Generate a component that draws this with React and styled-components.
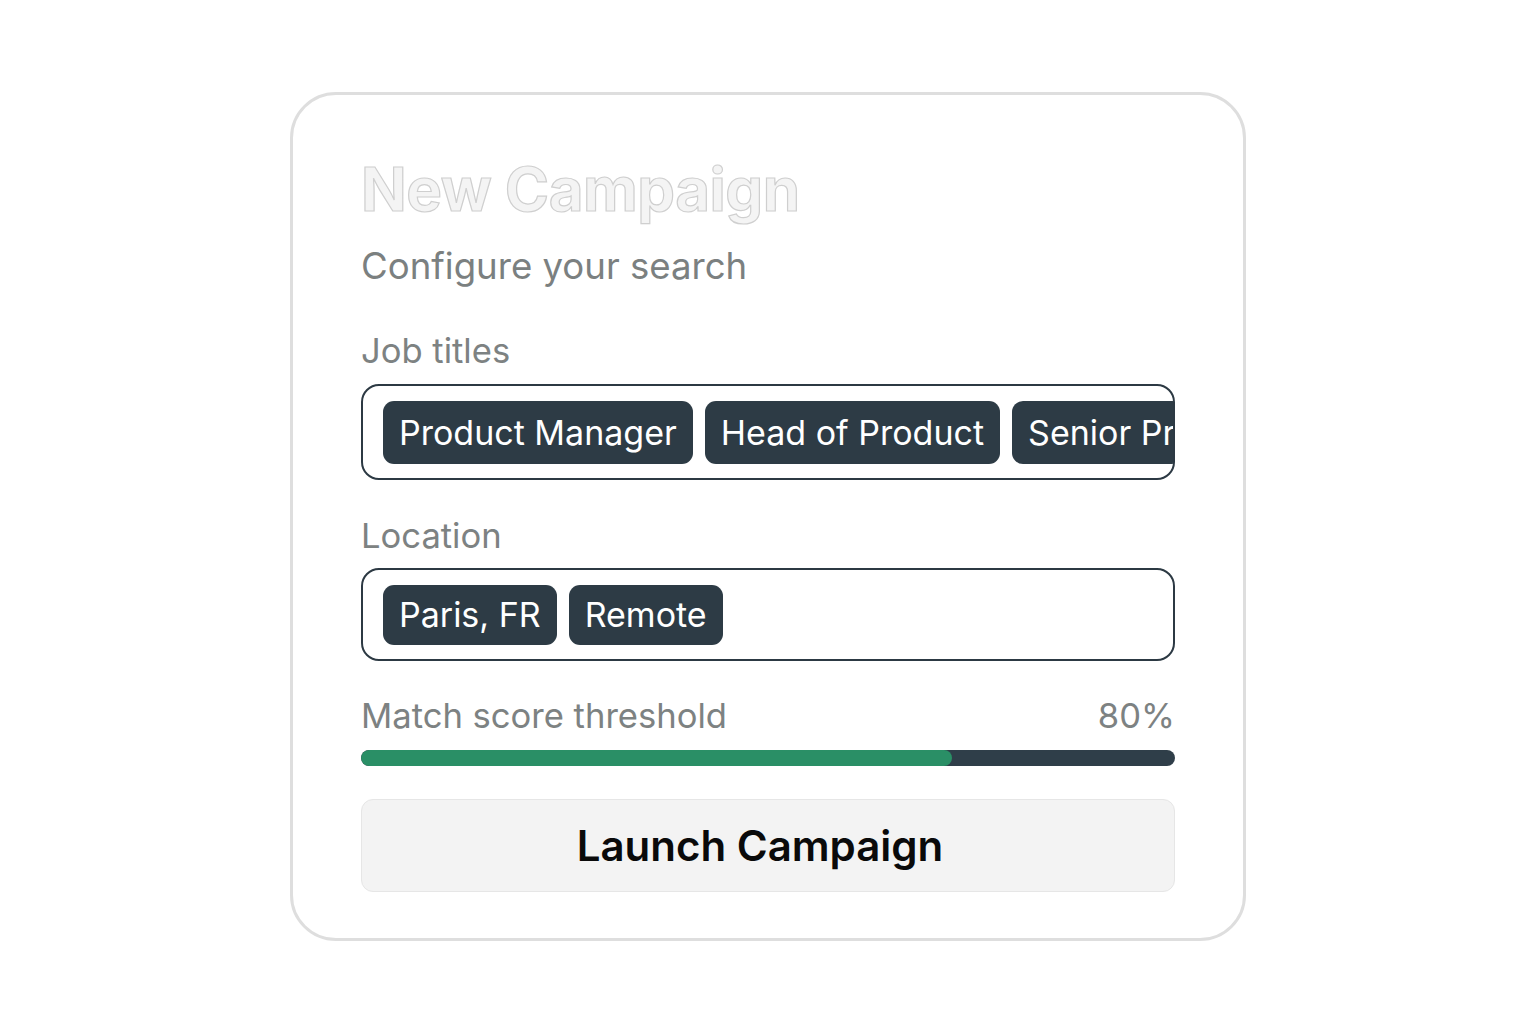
import React from "react";
import styled, { createGlobalStyle } from "styled-components";

const Global = createGlobalStyle`
  html, body { margin: 0; padding: 0; background: #ffffff; }
  body { font-family: Inter, "Noto Sans", "Liberation Sans", sans-serif; }
  * { box-sizing: border-box; }
`;

const Page = styled.div`
  display: flex;
  justify-content: center;
  padding-top: 92px;
  width: 1536px;
  height: 1024px;
`;

const Card = styled.div`
  width: 956px;
  height: 849px;
  border: 3px solid #dedede;
  border-radius: 46px;
  background: #ffffff;
  padding: 58px 68px 0 68px;
  display: flex;
  flex-direction: column;
`;

const Title = styled.h1`
  margin: 0;
  font-size: 60px;
  line-height: 72px;
  font-weight: 700;
  letter-spacing: -0.5px;
  color: #f4f4f4;
  -webkit-text-stroke: 1.2px #cfcfcf;
`;

const Subtitle = styled.p`
  margin: 19px 0 0 0;
  font-size: 36.6px;
  line-height: 44px;
  color: #7b8080;
`;

const Label = styled.div`
  display: flex;
  justify-content: space-between;
  margin-top: ${(p) => p.$mt}px;
  font-size: 34.6px;
  line-height: 40px;
  color: #7d8282;
`;

const TagField = styled.div`
  margin-top: ${(p) => p.$mt}px;
  height: ${(p) => p.$h}px;
  border: 2px solid #2c3943;
  border-radius: 18px;
  display: flex;
  align-items: center;
  gap: 12px;
  padding-left: 20px;
  overflow: hidden;
`;

const Tag = styled.span`
  flex: none;
  height: ${(p) => p.$h}px;
  display: inline-flex;
  align-items: center;
  padding: 0 16px;
  border-radius: 11px;
  background: #2d3b45;
  color: #ffffff;
  font-size: 34px;
  white-space: nowrap;
`;

const Track = styled.div`
  margin-top: 15px;
  height: 16px;
  border-radius: 8px;
  background: #2f3e49;
  overflow: hidden;
`;

const Fill = styled.div`
  height: 100%;
  border-radius: 8px;
  background: #2a8f66;
`;

const LaunchButton = styled.button`
  margin-top: 33px;
  height: 93px;
  width: 100%;
  padding: 0 16px 0 0;
  border: 1px solid #e6e6e6;
  border-radius: 12px;
  background: #f3f3f3;
  color: #0a0a0a;
  font-family: Inter, "Noto Sans", "Liberation Sans", sans-serif;
  font-size: 42px;
  font-weight: 600;
  cursor: pointer;
`;

const jobTitles = ["Product Manager", "Head of Product", "Senior Product Manager"];
const locations = ["Paris, FR", "Remote"];
const threshold = 72.6;

export default function App() {
  return (
    <>
      <Global />
      <Page>
        <Card>
          <Title>New Campaign</Title>
          <Subtitle>Configure your search</Subtitle>

          <Label $mt={42}>Job titles</Label>
          <TagField $mt={14} $h={96}>
            {jobTitles.map((t) => (
              <Tag key={t} $h={63}>{t}</Tag>
            ))}
          </TagField>

          <Label $mt={35}>Location</Label>
          <TagField $mt={13} $h={93}>
            {locations.map((t) => (
              <Tag key={t} $h={60}>{t}</Tag>
            ))}
          </TagField>

          <Label $mt={34}>
            <span>Match score threshold</span>
            <span>80%</span>
          </Label>
          <Track>
            <Fill style={{ width: `${threshold}%` }} />
          </Track>

          <LaunchButton>Launch Campaign</LaunchButton>
        </Card>
      </Page>
    </>
  );
}
